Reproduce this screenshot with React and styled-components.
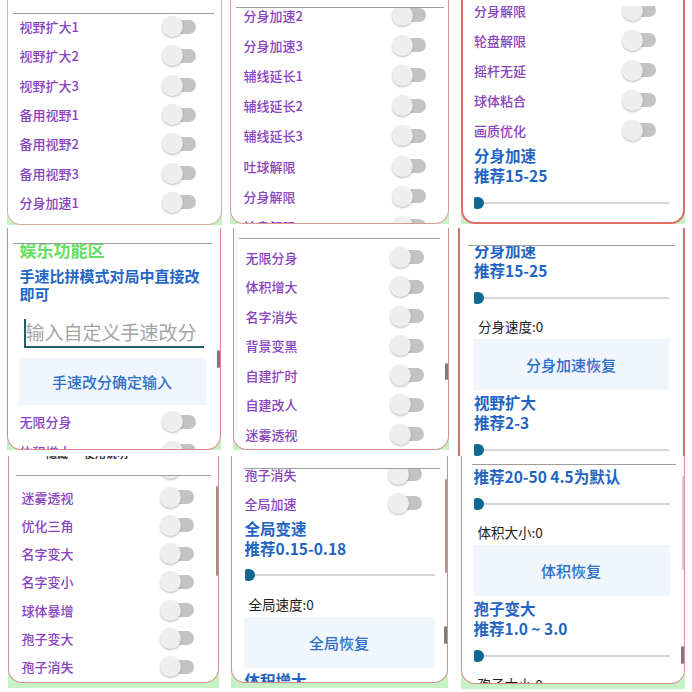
import React from 'react';
import styled, { createGlobalStyle } from 'styled-components';

const GlobalStyle = createGlobalStyle`
  html, body {
    margin: 0;
    padding: 0;
    background: #fff;
  }
  body {
    font-family: "Noto Sans CJK SC", "Noto Sans", sans-serif;
  }
`;

const Collage = styled.div`
  width: 692px;
  height: 692px;
  display: grid;
  grid-template-columns: 228px 228px 236px;
  grid-template-rows: 228px 228px 236px;
  overflow: hidden;
  background: #fff;
`;

const Shot = styled.div`
  overflow: hidden;
`;

const Backdrop = styled.div`
  margin: 0 ${p => p.$r}px 0 ${p => p.$l}px;
  padding-bottom: ${p => p.$under || 0}px;
  background: #c6f3c6;
`;

const Card = styled.div`
  position: relative;
  box-sizing: border-box;
  height: ${p => p.$h}px;
  background: #fff;
  border: ${p => p.$bw || 1.5}px solid ${p => p.$edge || '#d99a95'};
  border-top: none;
  border-radius: 0 0 14px 14px;
  overflow: hidden;
`;

const TitleBar = styled.div`
  position: absolute;
  top: 0;
  left: ${p => p.$il}px;
  right: ${p => p.$ir}px;
  height: ${p => p.$y}px;
  background: #fff;
  border-bottom: 1.5px solid ${p => p.$line || '#9d9d9d'};
  z-index: 2;
  overflow: hidden;
  display: flex;
  align-items: flex-start;
`;

const TitleText = styled.span`
  margin-top: -9px;
  margin-left: ${p => p.$ml}px;
  font-size: 11px;
  line-height: 13px;
  font-weight: 700;
  color: #333;
  white-space: nowrap;
`;

const ScrollThumb = styled.span`
  position: absolute;
  right: 0;
  top: ${p => p.$top}px;
  width: ${p => p.$w || 3}px;
  height: ${p => p.$len}px;
  background: ${p => p.$c || '#7c7c7c'};
  border-radius: 2px;
  z-index: 3;
`;

const Body = styled.div`
  margin-top: ${p => p.$top}px;
  padding: 0 ${p => p.$pr}px 0 ${p => p.$pl}px;
  display: flex;
  flex-direction: column;
`;

const ToggleRow = styled.div`
  flex-shrink: 0;
  height: ${p => p.$h}px;
  display: flex;
  align-items: center;
  justify-content: space-between;
  padding-right: ${p => p.$gap}px;
`;

const Label = styled.span`
  font-size: 13px;
  line-height: 1;
  font-weight: 500;
  color: #8a43bf;
  white-space: nowrap;
`;

const Switch = styled.span`
  position: relative;
  flex-shrink: 0;
  width: 34px;
  height: 22px;
`;

const SwitchTrack = styled.span`
  position: absolute;
  left: 6px;
  right: 0;
  top: 4px;
  height: 14px;
  border-radius: 7px;
  background: #c3c3c3;
`;

const SwitchKnob = styled.span`
  position: absolute;
  left: 0;
  top: 0.5px;
  width: 21px;
  height: 21px;
  border-radius: 50%;
  background: #eeeeee;
  box-shadow: 0 1px 2px rgba(0, 0, 0, 0.28);
`;

const Heading = styled.div`
  flex-shrink: 0;
  font-size: 15.5px;
  line-height: 20px;
  font-weight: 700;
  color: #1f64c2;
  white-space: nowrap;
`;

const GreenTitle = styled.div`
  flex-shrink: 0;
  font-size: 17px;
  line-height: 22px;
  font-weight: 700;
  color: #62e062;
`;

const Note = styled.div`
  flex-shrink: 0;
  margin-top: 6px;
  font-size: 15px;
  line-height: 17.5px;
  font-weight: 700;
  color: #2466c4;
`;

const InputField = styled.div`
  flex-shrink: 0;
  margin: 10px 2px 0 4px;
  padding-top: 6px;
  height: 28px;
  display: flex;
  align-items: center;
  border-bottom: 2px solid #1f5d6c;
`;

const Caret = styled.span`
  width: 2px;
  height: 27px;
  background: #1f5d6c;
  flex-shrink: 0;
`;

const Placeholder = styled.span`
  font-size: 19px;
  line-height: 28px;
  color: #a4a4a4;
  white-space: nowrap;
`;

const SliderRow = styled.div`
  flex-shrink: 0;
  height: 35px;
  display: flex;
  align-items: center;
`;

const SliderThumb = styled.span`
  position: relative;
  z-index: 1;
  flex-shrink: 0;
  width: 10px;
  height: 12px;
  background: #0e6890;
  border-radius: 2px 6px 6px 2px;
`;

const SliderTrack = styled.span`
  flex: 1;
  height: 2px;
  margin-left: -2px;
  background: #d6d6d6;
`;

const ValueText = styled.div`
  flex-shrink: 0;
  padding-left: 4px;
  font-size: 13.5px;
  line-height: 22px;
  color: #1d1d1d;
`;

const ActionButton = styled.div`
  flex-shrink: 0;
  height: ${p => p.$h || 51}px;
  margin: ${p => p.$mt ?? 2}px 0 2px -1px;
  display: flex;
  align-items: center;
  justify-content: center;
  background: #f0f6fc;
  color: #2b6ec6;
  font-size: 15px;
  font-weight: 500;
`;

const Toggle = ({ label, h, gap }) => (
  <ToggleRow $h={h} $gap={gap}>
    <Label>{label}</Label>
    <Switch>
      <SwitchTrack />
      <SwitchKnob />
    </Switch>
  </ToggleRow>
);

const Slider = () => (
  <SliderRow>
    <SliderThumb />
    <SliderTrack />
  </SliderRow>
);

const toggles = (list, h, gap) => list.map(t => <Toggle key={t} label={t} h={h} gap={gap} />);

export default function App() {
  return (
    <>
      <GlobalStyle />
      <Collage>
        {/* row 1 */}
        <Shot>
          <Backdrop $l={7} $r={6}>
            <Card $h={225} $edge="#dcaaa4">
              <TitleBar $y={13} $il={5} $ir={7} />
              <Body $top={12} $pl={11.5} $pr={14.5}>
                {toggles(['视野扩大1', '视野扩大2', '视野扩大3', '备用视野1', '备用视野2', '备用视野3', '分身加速1'], 29.3, 11)}
              </Body>
            </Card>
          </Backdrop>
        </Shot>

        <Shot>
          <Backdrop $l={2} $r={7}>
            <Card $h={224} $edge="#d99a95">
              <TitleBar $y={7} $il={5} $ir={4} />
              <Body $top={0} $pl={12.5} $pr={14.5}>
                {toggles(['分身加速2', '分身加速3', '辅线延长1', '辅线延长2', '辅线延长3', '吐球解限', '分身解限', '轮盘解限'], 30.2, 8)}
              </Body>
            </Card>
          </Backdrop>
        </Shot>

        <Shot>
          <Backdrop $l={5} $r={7}>
            <Card $h={224} $bw={2} $edge="#de6f66">
              <TitleBar $y={5} $il={4} $ir={4} $line="#fff" />
              <Body $top={-5} $pl={11} $pr={14}>
                {toggles(['分身解限', '轮盘解限', '摇杆无延', '球体粘合', '画质优化'], 30, 13)}
                <Heading>分身加速<br />推荐15-25</Heading>
                <Slider />
                <ValueText>分身速度:0</ValueText>
              </Body>
            </Card>
          </Backdrop>
        </Shot>

        {/* row 2 */}
        <Shot>
          <Backdrop $l={7} $r={7}>
            <Card $h={222} $edge="#d98882">
              <TitleBar $y={15} $il={5} $ir={8} />
              <ScrollThumb $top={122} $len={18} />
              <Body $top={11} $pl={11.5} $pr={14.5}>
                <GreenTitle>娱乐功能区</GreenTitle>
                <Note>手速比拼模式对局中直接改即可</Note>
                <InputField>
                  <Caret />
                  <Placeholder>输入自定义手速改分</Placeholder>
                </InputField>
                <ActionButton $h={47} $mt={10}>手速改分确定输入</ActionButton>
                {toggles(['无限分身', '体积增大'], 29.5, 10)}
              </Body>
            </Card>
          </Backdrop>
        </Shot>

        <Shot>
          <Backdrop $l={5} $r={7}>
            <Card $h={222} $edge="#d9908b">
              <TitleBar $y={10} $il={5} $ir={8} />
              <ScrollThumb $top={135} $len={17} />
              <Body $top={14.25} $pl={11.5} $pr={14.5}>
                {toggles(['无限分身', '体积增大', '名字消失', '背景变黑', '自建扩时', '自建改人', '迷雾透视'], 29.5, 10)}
              </Body>
            </Card>
          </Backdrop>
        </Shot>

        <Shot>
          <Backdrop $l={2} $r={7}>
            <Card $h={240} $bw={2} $edge="#c8746f">
              <TitleBar $y={17} $il={8} $ir={8} />
              <Body $top={12} $pl={14} $pr={14}>
                <Heading>分身加速<br />推荐15-25</Heading>
                <Slider />
                <ValueText>分身速度:0</ValueText>
                <ActionButton>分身加速恢复</ActionButton>
                <Heading>视野扩大<br />推荐2-3</Heading>
                <Slider />
              </Body>
            </Card>
          </Backdrop>
        </Shot>

        {/* row 3 */}
        <Shot>
          <Backdrop $l={8} $r={9} $under={5}>
            <Card $h={227} $edge="#d58f8a">
              <TitleBar $y={19} $il={7} $ir={7}>
                <TitleText $ml={30}>隐藏</TitleText>
                <TitleText $ml={16}>使用说明</TitleText>
              </TitleBar>
              <ScrollThumb $top={30} $len={90} $w={2} $c="#a58a86" />
              <Body $top={-1.45} $pl={12.5} $pr={14.5}>
                {toggles(['自建改人', '迷雾透视', '优化三角', '名字变大', '名字变小', '球体暴增', '孢子变大', '孢子消失'], 28.3, 10)}
              </Body>
            </Card>
          </Backdrop>
        </Shot>

        <Shot>
          <Backdrop $l={3} $r={8} $under={5}>
            <Card $h={227} $edge="#d58f8a">
              <TitleBar $y={12} $il={12} $ir={7} />
              <ScrollThumb $top={23} $len={94} $w={2} $c="#b09490" />
              <ScrollThumb $top={170} $len={18} />
              <Body $top={3.5} $pl={12.5} $pr={12.5}>
                {toggles(['孢子消失', '全局加速'], 29, 13)}
                <Heading>全局变速<br />推荐0.15-0.18</Heading>
                <Slider />
                <ValueText>全局速度:0</ValueText>
                <ActionButton>全局恢复</ActionButton>
                <Heading>体积增大<br />推荐20-50 4.5为默认</Heading>
              </Body>
            </Card>
          </Backdrop>
        </Shot>

        <Shot>
          <Backdrop $l={5} $r={7} $under={5}>
            <Card $h={228} $edge="#d58f8a">
              <TitleBar $y={8} $il={10} $ir={8} />
              <ScrollThumb $top={20} $len={94} $w={2} $c="#cfcfcf" />
              <ScrollThumb $top={190} $len={18} />
              <Body $top={-10} $pl={11.5} $pr={14.5}>
                <Heading>体积增大<br />推荐20-50 4.5为默认</Heading>
                <Slider />
                <ValueText>体积大小:0</ValueText>
                <ActionButton>体积恢复</ActionButton>
                <Heading>孢子变大<br />推荐1.0 ~ 3.0</Heading>
                <Slider />
                <ValueText>孢子大小:0</ValueText>
              </Body>
            </Card>
          </Backdrop>
        </Shot>
      </Collage>
    </>
  );
}
